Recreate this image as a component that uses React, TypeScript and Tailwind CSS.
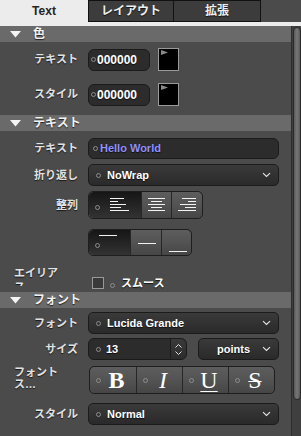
import React from "react";

const font = "font-['Liberation_Sans','Noto_Sans_CJK_JP',sans-serif]";
const shadow = "[text-shadow:0_1px_1px_rgba(0,0,0,0.7)]";

function Dot() {
  return <span className="inline-block h-[5px] w-[5px] shrink-0 rounded-full border border-[#8c8c8c]" />;
}

function Chevron() {
  return (
    <svg width="9" height="6" viewBox="0 0 9 6" className="shrink-0">
      <path d="M1 1.2l3.5 3.3 3.5-3.3" fill="none" stroke="#e8e8e8" strokeWidth="1.1" />
    </svg>
  );
}

function Header({ title }: { title: string }) {
  return (
    <div className="flex h-[16px] items-center bg-[#6a6a6a]">
      <svg width="11" height="7" viewBox="0 0 11 7" className="ml-[10px]">
        <path d="M0 0h11L5.5 6.5z" fill="#f4f4f4" />
      </svg>
      <span className={`ml-[12px] text-[12px] font-bold text-[#f2f2f2] ${shadow}`}>{title}</span>
    </div>
  );
}

function Row({ label, children, className }: { label: string; children: React.ReactNode; className: string }) {
  return (
    <div className={`flex items-center ${className}`}>
      <div className={`w-[78px] text-right text-[11px] font-bold text-[#e2e2e2] ${shadow}`}>{label}</div>
      <div className="ml-[10px] flex items-center">{children}</div>
    </div>
  );
}

function ColorField() {
  return (
    <div className="flex items-center">
      <div className="flex h-[22px] w-[62px] items-center rounded-[6px] border border-[#1b1b1b] bg-[#2c2c2c] pl-[2px]">
        <Dot />
        <span className={`ml-[1px] text-[12px] font-bold text-white ${shadow}`}>000000</span>
      </div>
      <div className="relative ml-[8px] h-[23px] w-[21px] border border-[#9a9a9a] bg-black">
        <svg width="7" height="5" viewBox="0 0 7 5" className="absolute left-[2px] top-[1px]">
          <path d="M0 0v5L7 2.5z" fill="#8a8a8a" />
        </svg>
      </div>
    </div>
  );
}

function Dropdown({ text, w }: { text: string; w: string }) {
  return (
    <div className={`flex h-[22px] ${w} items-center rounded-[5px] border border-[#1b1b1b] bg-gradient-to-b from-[#3a3a3a] to-[#2a2a2a] pl-[7px] pr-[7px]`}>
      <Dot />
      <span className={`ml-[6px] flex-1 text-[11px] font-bold text-white ${shadow}`}>{text}</span>
      <Chevron />
    </div>
  );
}

function Seg({ selected, w, first, last, children }: { selected?: boolean; w: string; first?: boolean; last?: boolean; children: React.ReactNode }) {
  return (
    <div
      className={`flex h-full ${w} items-center ${first ? "" : "border-l border-[#262626]"} ${
        selected ? "bg-gradient-to-b from-[#161616] to-[#333333]" : "bg-gradient-to-b from-[#5d5d5d] via-[#535353] to-[#464646]"
      } ${first ? "rounded-l-[5px]" : ""} ${last ? "rounded-r-[5px]" : ""}`}
    >
      {children}
    </div>
  );
}

function Lines({ rows }: { rows: [number, number][] }) {
  return (
    <svg width="20" height="16" viewBox="0 0 20 16">
      {rows.map(([x1, x2], i) => (
        <rect key={i} x={x1} y={1 + i * 3} width={x2 - x1} height="1" fill="#f2f2f2" />
      ))}
    </svg>
  );
}

function Bar({ y }: { y: number }) {
  return (
    <svg width="20" height="26" viewBox="0 0 20 26">
      <rect x="1" y={y} width="18" height="1" fill="#f2f2f2" />
    </svg>
  );
}

function StyleSeg({ first, last, children }: { first?: boolean; last?: boolean; children: React.ReactNode }) {
  return (
    <Seg w="w-[46px]" first={first} last={last}>
      <div className="ml-[6px] flex items-center">
        <Dot />
      </div>
      <div className="flex flex-1 justify-center pr-[4px] font-['Liberation_Serif',serif] text-[24px] leading-none text-white">{children}</div>
    </Seg>
  );
}

export default function App() {
  return (
    <div className={`flex h-[436px] w-[301px] flex-col overflow-hidden bg-[#4b4b4b] ${font}`}>
      {/* tabs */}
      <div className="flex h-[22px] shrink-0">
        <div className="flex w-[88px] items-center justify-center bg-[#ececec] text-[12px] font-bold text-[#252525]">Text</div>
        <div className={`flex w-[86px] items-center justify-center border border-[#111] bg-[#3c3c3c] text-[12px] font-bold text-[#eee] ${shadow}`}>レイアウト</div>
        <div className={`flex w-[87px] items-center justify-center border border-l-0 border-[#111] bg-[#3c3c3c] text-[12px] font-bold text-[#eee] ${shadow}`}>拡張</div>
        <div className="flex-1 bg-[#4b4b4b]" />
      </div>
      <div className="h-[4px] shrink-0 bg-[#ececec]" />

      <div className="flex min-h-0 flex-1">
        <div className="flex w-[291px] flex-col">
          <div className="h-[17px]">
            <Header title="色" />
          </div>
          <Row label="テキスト" className="mt-[5px] h-[23px]">
            <ColorField />
          </Row>
          <Row label="スタイル" className="mt-[12px] h-[23px]">
            <ColorField />
          </Row>

          <div className="mt-[9px]">
            <Header title="テキスト" />
          </div>
          <Row label="テキスト" className="mt-[7px] h-[21px]">
            <div className="flex h-[21px] w-[191px] items-center rounded-[6px] border border-[#1b1b1b] bg-[#2c2c2c] pl-[4px]">
              <Dot />
              <span className={`ml-[2px] text-[11px] font-bold text-[#9090ff] ${shadow}`}>Hello World</span>
            </div>
          </Row>
          <Row label="折り返し" className="mt-[5px] h-[22px]">
            <Dropdown text="NoWrap" w="w-[191px]" />
          </Row>
          <Row label="整列" className="mt-[5px] h-[28px]">
            <div className="flex h-[28px] overflow-hidden rounded-[5px] border border-[#1e1e1e]">
              <Seg selected first w="w-[52px]">
                <div className="ml-[6px]"><Dot /></div>
                <div className="ml-[10px]">
                  <Lines rows={[[0, 14], [0, 8], [0, 16], [0, 11], [0, 19]]} />
                </div>
              </Seg>
              <Seg w="w-[30px]">
                <div className="ml-[6px]">
                  <Lines rows={[[0, 17], [3, 14], [0, 17], [3, 14], [0, 17]]} />
                </div>
              </Seg>
              <Seg w="w-[31px]" last>
                <div className="ml-[6px]">
                  <Lines rows={[[4, 18], [10, 18], [2, 18], [7, 18], [0, 18]]} />
                </div>
              </Seg>
            </div>
          </Row>
          <Row label="" className="mt-[10px] h-[27px]">
            <div className="flex h-[27px] overflow-hidden rounded-[5px] border border-[#1e1e1e]">
              <Seg selected first w="w-[41px]">
                <div className="ml-[6px] self-center"><Dot /></div>
                <div className="-ml-[2px]">
                  <Bar y={5} />
                </div>
              </Seg>
              <Seg w="w-[31px]">
                <div className="ml-[6px]"><Bar y={13} /></div>
              </Seg>
              <Seg w="w-[30px]" last>
                <div className="ml-[6px]"><Bar y={21} /></div>
              </Seg>
            </div>
          </Row>

          <div className="mt-[9px] flex h-[27px] items-start">
            <div className={`mt-[1px] h-[20px] w-[78px] overflow-hidden pl-[14px] text-[11px] font-bold leading-[14px] text-[#e2e2e2] ${shadow}`}>
              エイリア
              <br />
              ス
            </div>
            <div className="ml-[14px] mt-[6px] flex items-center">
              <div className="h-[12px] w-[12px] border border-[#999] bg-[#3a3a3a]" />
              <div className="ml-[6px]"><Dot /></div>
              <span className={`ml-[6px] text-[11px] font-bold text-white ${shadow}`}>スムース</span>
            </div>
          </div>

          <Header title="フォント" />
          <Row label="フォント" className="mt-[4px] h-[22px]">
            <Dropdown text="Lucida Grande" w="w-[191px]" />
          </Row>
          <Row label="サイズ" className="mt-[4px] h-[22px]">
            <div className="flex h-[22px] w-[99px] items-center rounded-[6px] border border-[#1b1b1b] bg-[#2c2c2c] pl-[7px]">
              <Dot />
              <span className={`ml-[5px] flex-1 text-[11px] font-bold text-white ${shadow}`}>13</span>
              <div className="flex h-full w-[16px] flex-col items-center justify-center gap-[3px] rounded-r-[6px] border-l border-[#1b1b1b] bg-gradient-to-b from-[#3a3a3a] to-[#2c2c2c]">
                <svg width="7" height="4" viewBox="0 0 7 4"><path d="M0.5 3.5l3-3 3 3" fill="none" stroke="#ddd" strokeWidth="1" /></svg>
                <svg width="7" height="4" viewBox="0 0 7 4"><path d="M0.5 0.5l3 3 3-3" fill="none" stroke="#ddd" strokeWidth="1" /></svg>
              </div>
            </div>
            <div className="ml-[11px]">
              <div className="flex h-[22px] w-[81px] items-center rounded-[5px] border border-[#1b1b1b] bg-gradient-to-b from-[#3a3a3a] to-[#2a2a2a] pl-[18px] pr-[7px]">
                <span className={`flex-1 text-[11px] font-bold text-white ${shadow}`}>points</span>
                <Chevron />
              </div>
            </div>
          </Row>
          <div className="mt-[6px] flex h-[28px] items-center">
            <div className={`h-[28px] w-[78px] pl-[14px] text-[11px] font-bold leading-[12px] text-[#e2e2e2] ${shadow}`}>
              フォント
              <br />
              ス…
            </div>
            <div className="ml-[11px] flex h-[28px] overflow-hidden rounded-[5px] border border-[#1e1e1e]">
              <StyleSeg first>
                <span className="font-bold">B</span>
              </StyleSeg>
              <StyleSeg>
                <span className="italic">I</span>
              </StyleSeg>
              <StyleSeg>
                <span className="underline decoration-1 underline-offset-[3px]">U</span>
              </StyleSeg>
              <StyleSeg last>
                <span className="line-through decoration-1">S</span>
              </StyleSeg>
            </div>
          </div>
          <Row label="スタイル" className="mt-[9px] h-[22px]">
            <Dropdown text="Normal" w="w-[191px]" />
          </Row>
        </div>

        {/* scrollbar */}
        <div className="flex w-[10px] flex-col border-l border-[#2e2e2e] bg-[#3f3f3f] pt-[1px]">
          <div className="ml-[1px] h-[373px] w-[8px] rounded-full border border-[#2a2a2a] bg-gradient-to-r from-[#5a5a5a] via-[#777] to-[#5a5a5a]" />
        </div>
      </div>
    </div>
  );
}
